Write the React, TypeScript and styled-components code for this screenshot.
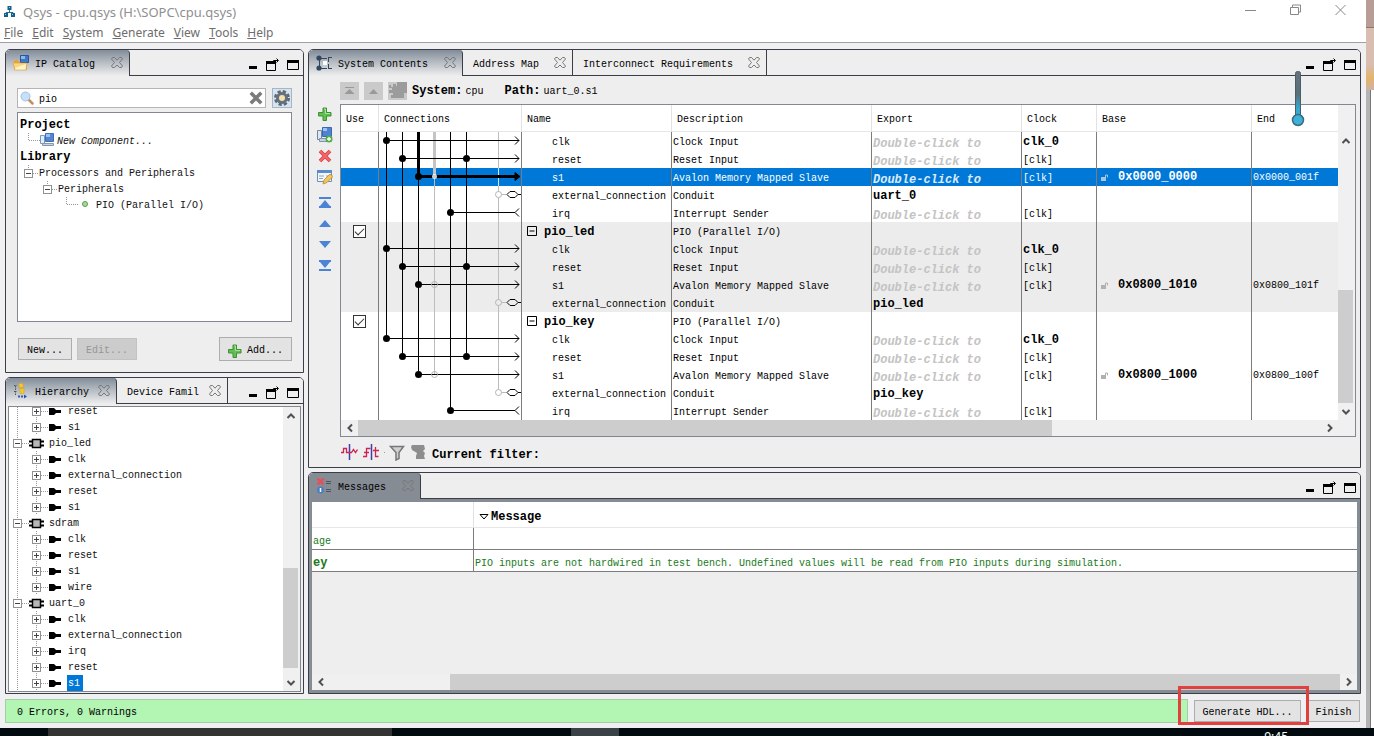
import React from 'react';
import styled, { createGlobalStyle, css } from 'styled-components';

const Global = createGlobalStyle`
  *, *::before, *::after { box-sizing: border-box; }
  body { margin: 0; background: #eeeeee; }
  button, input { font: inherit; color: inherit; }
  button { padding: 0; border: 0; background: none; white-space: nowrap; }
`;

const MONO = '"Liberation Mono", "Noto Sans CJK SC", monospace';
const UI = '"Noto Sans", "Open Sans", sans-serif';
const LINE = '#3b3e46';
const GRID = '#7c7c7c';

const Desktop = styled.div`
  display: grid;
  grid-template-columns: minmax(0, 1fr) 8px;
  grid-template-rows: minmax(0, 1fr) 8px;
  height: 100vh;
  overflow: hidden;
  font: 10px/16px ${MONO};
  color: #000;
`;

const AppWindow = styled.main`
  display: flex;
  flex-direction: column;
  background: #f0eff1;
  min-width: 0;
`;

const TitleBar = styled.header`
  display: flex;
  align-items: center;
  gap: 8px;
  height: 23px;
  padding: 0 20px 0 4px;
  background: #fff;
  color: #8f8f8f;
  font: 13px/20px ${UI};
`;

const WindowControls = styled.div`
  display: flex;
  align-items: center;
  gap: 34px;
  margin-left: auto;
  padding-bottom: 3px;
  button { display: flex; height: 20px; }
`;

const MenuBar = styled.nav`
  display: flex;
  gap: 9px;
  height: 20px;
  padding: 0 4px;
  background: #fff;
  border-bottom: 1px solid #a0a0a0;
  color: #6d6d6d;
  font: 12px/18px ${UI};
`;

const MenuItem = styled.button`
  &::first-letter { text-decoration: underline; }
`;

const Workspace = styled.div`
  flex: 1;
  min-height: 0;
  display: grid;
  grid-template-columns: 299px minmax(0, 1fr);
  gap: 4px;
  padding: 6px 5px 5px;
`;

const Column = styled.div`
  display: flex;
  flex-direction: column;
  gap: 4px;
  min-width: 0;
  min-height: 0;
`;

const PanelBox = styled.section<{ $basis?: number }>`
  display: flex;
  flex-direction: column;
  min-height: 0;
  ${p => (p.$basis ? css`flex: none; height: ${p.$basis}px;` : css`flex: 1;`)}
  border: 1px solid ${LINE};
  border-radius: 5px 5px 0 0;
  background: #eeeeee;
  overflow: hidden;
`;

const TabStrip = styled.div`
  display: flex;
  flex: none;
  height: 26px;
  border-bottom: 1px solid ${LINE};
  background: #eeeeee;
`;

const Tab = styled.div<{ $w: number; $active?: boolean; $focused?: boolean }>`
  display: flex;
  align-items: center;
  width: ${p => p.$w}px;
  height: ${p => (p.$active ? 26 : 25)}px;
  padding: 0 6px 0 ${p => (p.$active ? 7 : 10)}px;
  border-right: 1px solid ${LINE};
  background: ${p =>
    p.$focused ? '#868c94' : p.$active ? 'linear-gradient(#818c99, #b4bac1 45%, #eeeeee)' : '#eeeeee'};
  border-radius: ${p => (p.$active ? '4px 4px 0 0' : '0')};
`;

const TabTitle = styled.button`
  display: flex;
  align-items: center;
  gap: 6px;
  flex: 1;
  min-width: 0;
  overflow: hidden;
  line-height: 20px;
  span { padding-top: 4px; }
`;

const TabClose = styled.button`
  display: flex;
`;

const PanelControls = styled.div`
  display: flex;
  align-items: center;
  gap: 8px;
  margin-left: auto;
  padding: 4px 4px 0 0;
  button { display: flex; }
`;

const CatalogBody = styled.div`
  flex: 1;
  display: flex;
  flex-direction: column;
  min-height: 0;
  padding: 12px 11px 11px;
`;

const SearchRow = styled.div`
  display: flex;
  gap: 6px;
  height: 20px;
`;

const SearchField = styled.label`
  display: flex;
  align-items: center;
  flex: 1;
  gap: 5px;
  padding: 0 2px;
  background: #fff;
  border: 1px solid #b5b5b5;
  button { display: flex; }
`;

const SearchInput = styled.input`
  flex: 1;
  min-width: 0;
  border: 0;
  outline: 0;
  padding: 3px 0 0;
  background: transparent;
`;

const GearButton = styled.button`
  display: flex;
  align-items: center;
  justify-content: center;
  width: 20px;
  background: #d5e4f2;
  border: 1px solid #a9b6c2;
`;

const CatalogTree = styled.div`
  flex: 1;
  margin-top: 4px;
  padding: 4px 2px;
  background: #fff;
  border: 1px solid #828790;
  overflow: hidden;
`;

const CatalogRow = styled.div<{ $bold?: boolean; $italic?: boolean }>`
  display: flex;
  height: 16px;
  white-space: nowrap;
  font-size: ${p => (p.$bold ? 12 : 10)}px;
  font-weight: ${p => (p.$bold ? 700 : 400)};
  font-style: ${p => (p.$italic ? 'italic' : 'normal')};
  svg { flex: none; }
`;

const CatalogActions = styled.div`
  display: flex;
  align-items: center;
  gap: 5px;
  padding: 15px 0 0 1px;
`;

const PushButton = styled.button<{ $w?: number; $right?: boolean; $h?: number }>`
  display: flex;
  align-items: center;
  justify-content: center;
  gap: 5px;
  width: ${p => p.$w}px;
  height: ${p => p.$h ?? 22}px;
  padding-top: 3px;
  background: #e3e3e3;
  border: 1px solid #adadad;
  margin-left: ${p => (p.$right ? 'auto' : '0')};
  &:disabled { background: #cccccc; border-color: #c2c2c2; color: #969696; }
`;

const HierarchyBody = styled.div`
  flex: 1;
  display: flex;
  min-height: 0;
  margin: 2px 2px 1px;
  background: #fff;
  border: 1px solid #828790;
`;

const HierarchyTree = styled.div`
  flex: 1;
  display: flex;
  flex-direction: column;
  justify-content: flex-end;
  overflow: hidden;
`;

const HierarchyRow = styled.div<{ $root?: boolean }>`
  display: flex;
  flex: none;
  height: 16px;
  white-space: nowrap;
  gap: ${p => (p.$root ? 3 : 4)}px;
`;

const NodeName = styled.span<{ $selected?: boolean }>`
  padding: 1px 3px 0 1px;
  background: ${p => (p.$selected ? '#0078d7' : 'transparent')};
  color: ${p => (p.$selected ? '#fff' : '#111')};
`;

const VScroll = styled.div`
  flex: none;
  display: flex;
  flex-direction: column;
  width: 17px;
  padding-right: 2px;
  background: #f0f0f0;
  button { display: flex; justify-content: center; align-items: center; height: 17px; }
`;

const HScroll = styled.div<{ $corner?: boolean }>`
  flex: none;
  display: flex;
  height: 16px;
  padding-right: ${p => (p.$corner ? 17 : 0)}px;
  background: #f0f0f0;
  button { display: flex; justify-content: center; align-items: center; width: 17px; }
`;

const HeaderCorner = styled.div`
  flex: none;
  height: 27px;
`;

const Space = styled.div<{ $grow: number }>`
  flex: ${p => p.$grow} 1 0;
`;

const Thumb = styled.div<{ $grow: number }>`
  flex: ${p => p.$grow} 1 0;
  background: #cdcdcd;
`;

const SystemBody = styled.div`
  flex: 1;
  display: grid;
  grid-template-columns: 31px minmax(0, 1fr);
  grid-template-rows: 28px minmax(0, 1fr) 30px;
  min-height: 0;
  padding-right: 4px;
`;

const PathBar = styled.div`
  grid-column: 2;
  display: flex;
  align-items: center;
  gap: 5px;
  padding-top: 1px;
`;

const PathText = styled.div`
  display: flex;
  align-items: baseline;
  gap: 3px;
  padding-top: 2px;
`;

const NavButton = styled.button`
  display: flex;
  align-items: center;
  justify-content: center;
  width: 19px;
  height: 18px;
  background: #cacaca;
`;

const Strong = styled.b<{ $gap?: boolean }>`
  font-size: 12px;
  margin-left: ${p => (p.$gap ? 18 : 0)}px;
`;

const SideTools = styled.div`
  display: flex;
  flex-direction: column;
  gap: 9px;
  padding-top: 2px;
`;

const ToolGroup = styled.div`
  display: flex;
  flex-direction: column;
  align-items: center;
  gap: 5px;
  button { display: flex; align-items: center; height: 16px; }
`;

const TableFrame = styled.div`
  display: flex;
  flex-direction: column;
  border: 1px solid #828790;
  background: #fff;
  min-width: 0;
  min-height: 0;
`;

const TableArea = styled.div`
  flex: 1;
  display: flex;
  min-height: 0;
`;

const TableClip = styled.div`
  flex: 1;
  overflow: hidden;
  min-width: 0;
`;

const Grid = styled.table`
  width: 100%;
  table-layout: fixed;
  border-collapse: separate;
  border-spacing: 0;
`;

const HeadCell = styled.th`
  height: 27px;
  padding: 4px 0 0 5px;
  border-left: 1px solid #e2e2e2;
  border-bottom: 1px solid #e6e6e6;
  font-weight: 400;
  text-align: left;
  &:first-child { border-left: 0; }
`;

const Row = styled.tr<{ $tone: Tone }>`
  background: ${p => (p.$tone === 'selected' ? '#0078d7' : p.$tone === 'gray' ? '#ececec' : '#fff')};
  color: ${p => (p.$tone === 'selected' ? '#fff' : '#000')};
`;

const Cell = styled.td<{ $bold?: boolean; $indent?: boolean }>`
  height: 18px;
  padding: 3px 0 0 1px;
  border-left: 1px solid ${GRID};
  line-height: 15px;
  white-space: nowrap;
  overflow: hidden;
  ${p => p.$bold && css`font-size: 12px; font-weight: 700;`}
  ${p => p.$indent && css`padding-left: 30px;`}
`;

const AddressCell = styled(Cell)`
  padding-top: 1px;
  line-height: 17px;
`;

const UseCell = styled(Cell)`
  border-left: 0;
  padding: 0 0 0 12px;
`;

const WireCell = styled.td`
  padding: 0;
  border-left: 1px solid ${GRID};
  vertical-align: top;
  svg { display: block; }
`;

const Hint = styled.div<{ $selected?: boolean }>`
  padding-top: 3px;
  line-height: 12px;
  font-size: 12px;
  font-weight: 700;
  font-style: italic;
  color: ${p => (p.$selected ? '#dcebfa' : '#c3c3c3')};
`;

const Group = styled.span`
  display: flex;
  align-items: center;
  gap: 6px;
  padding-left: 4px;
  font-size: 12px;
  font-weight: 700;
`;

const Address = styled.span`
  display: flex;
  align-items: center;
  gap: 8px;
  padding-left: 2px;
  font-size: 12px;
  font-weight: 700;
`;

const Check = styled.input`
  appearance: none;
  display: block;
  width: 13px;
  height: 13px;
  margin: 0;
  border: 1px solid #333;
  background: #fff;
  &:checked::after {
    content: '';
    display: block;
    width: 9px;
    height: 5px;
    margin: 2px 0 0 1px;
    border: solid #333;
    border-width: 0 0 1px 1px;
    transform: rotate(-45deg);
  }
`;

const FilterBar = styled.div`
  grid-column: 2;
  display: flex;
  align-items: center;
  gap: 5px;
  padding-left: 1px;
  button { display: flex; }
  ${Strong} { padding: 6px 0 0 1px; }
`;

const FilterDivider = styled.i`
  width: 1px;
  height: 1px;
  margin: 0 -1px;
  background: #999;
`;

const MessageBody = styled.div`
  flex: 1;
  display: flex;
  flex-direction: column;
  min-height: 0;
  border: 3px solid #868c94;
  background: #eeeeee;
`;

const MessageTable = styled.table`
  width: 100%;
  table-layout: fixed;
  border-collapse: separate;
  border-spacing: 0;
  background: #fff;
  color: #187a18;
  th {
    height: 26px;
    padding: 5px 0 0 5px;
    border-left: 1px solid #e2e2e2;
    border-bottom: 1px solid #e6e6e6;
    font-size: 12px;
    text-align: left;
    color: #000;
  }
  td {
    height: 22px;
    padding: 5px 0 0 1px;
    line-height: 15px;
    border-left: 1px solid ${GRID};
    border-bottom: 1px solid ${GRID};
    white-space: nowrap;
    overflow: hidden;
  }
  th:first-child, td:first-child { border-left: 0; }
  b { display: block; font-size: 12px; }
`;

const MessageHead = styled.span`
  display: flex;
  align-items: center;
  gap: 2px;
`;

const StatusBar = styled.footer`
  display: flex;
  align-items: center;
  gap: 6px;
  padding: 0 6px 5px 5px;
`;

const StatusText = styled.div`
  flex: 1;
  height: 24px;
  padding: 3px 0 0 11px;
  line-height: 20px;
  background: #b3f5b3;
  border: 1px solid #a4cfa4;
`;

const Highlighted = styled.div`
  position: relative;
  &::after {
    content: '';
    position: absolute;
    inset: -14px -8px -3px -16px;
    border: 3px solid #e0413f;
    pointer-events: none;
  }
`;

const Thermometer = styled.svg`
  position: absolute;
  top: 70px;
  right: 68px;
`;

const Backdrop = styled.aside`
  display: flex;
  flex-direction: column;
  background: #fff;
`;

const BackdropArt = styled.div`
  height: 90px;
  background: linear-gradient(#b79d96 0 27px, #8d746e 27px 28px, #d8bdb0 28px 65px, #e3b468 78px, #cfb2a5 90px);
`;

const BackdropEdge = styled.div`
  flex: 1;
  width: 5px;
  background: #b4b4b4;
  border-right: 1px solid #777;
`;

const TaskBar = styled.div`
  grid-column: 1 / -1;
  display: flex;
  height: 8px;
  overflow: hidden;
  background: #010b0f;
  color: #fff;
  font: 12px/16px ${UI};
`;

const Task = styled.div<{ $at: number; $w: number; $tone: string }>`
  flex: none;
  width: ${p => p.$w}px;
  margin-left: ${p => p.$at}px;
  background: ${p => p.$tone};
`;

const Clock = styled.time`
  margin-left: auto;
  margin-right: 86px;
  padding-top: 1px;
`;

/* ---------- icons ---------- */

const CloseGlyph = () => (
  <svg width="12" height="12" viewBox="0 0 12 12" fill="none" stroke="#777" strokeWidth="1">
    <path d="M1.500 .5h2L6 3.200 8.500 .5h2l1 1.500L8.500 5.500l3 3.500-1 1.500h-2L6 8l-2.500 2.500h-2l-1-1.500 3-3.500-3-3.500z" />
  </svg>
);

const MinIcon = () => (
  <svg width="9" height="12" viewBox="0 0 9 12"><path d="M0 7h8v3H0z" fill="#000" /></svg>
);

const FloatIcon = () => (
  <svg width="13" height="13" viewBox="0 0 13 13" fill="none" stroke="#000">
    <path d="M.5 3.500v9h9v-9" /><path d="M0 4.500h10" strokeWidth="3" />
    <path d="M7.500 4.500V2.500H12M10.500 .5l2 2-2 2" />
  </svg>
);

const MaxIcon = () => (
  <svg width="12" height="10" viewBox="0 0 12 10" fill="none" stroke="#000">
    <path d="M.5 .5h11v9H.5z" /><path d="M0 1.500h12" strokeWidth="3" />
  </svg>
);

const QsysIcon = () => (
  <svg width="11" height="12" viewBox="0 0 11 12">
    <path d="M5.500 4v3M2 8V6.500h7V8" stroke="#1f6f96" fill="none" />
    <path d="M3.500 0h4v4h-4zM0 7h4v4H0zM7 7h4v4H7z" fill="#12628c" />
    <path d="M5 1h1v1H5zM1 8h1v1H1zM8 8h1v1H8z" fill="#7fd0e8" />
  </svg>
);

const CatalogIcon = () => (
  <svg width="16" height="16" viewBox="0 0 16 16">
    <path d="M1 5h4l1 2h8v8H1z" fill="#e8a33a" />
    <path d="M7.500 .5h8v7h-8z" fill="#3f78c8" stroke="#2a559b" />
    <path d="M8 1h4v3H8z" fill="#8fb8ea" />
    <path d="M0 8h14l-1 7H2z" fill="#fbd680" stroke="#d79a3a" strokeWidth=".6" />
    <path d="M2 13l11-4-.5 5.500H2z" fill="#fff1c8" />
  </svg>
);

const HierarchyIcon = () => (
  <svg width="16" height="16" viewBox="0 0 16 16" fill="none">
    <path d="M2.500 3v9M1 2.500h3M1 8.500h3" stroke="#555" strokeDasharray="1.500 1" />
    <path d="M6 .5h4v4H6zM7 5.500h4v5H7z" fill="#f2c830" stroke="#d8a520" strokeWidth=".6" />
    <path d="M5 13.500h2M8 13.500h2" stroke="#345db0" strokeWidth="2" /><path d="M11 11.500l3 2-3 2z" fill="#2b50b0" />
  </svg>
);

const SystemIcon = () => (
  <svg width="16" height="16" viewBox="0 0 16 16" fill="none">
    <path d="M3.500 2.500v11M3 3.500h8M3 13.500h8" stroke="#33475c" />
    <path d="M7 6h4v4H7z" fill="#fff" />
    <path d="M12 2h4v1h-3v4h-1zM12 9h1v4h3v1h-4z" fill="#33475c" />
    <circle cx="3" cy="3" r="2.600" fill="#2f4964" /><circle cx="3" cy="13" r="2.600" fill="#2f4964" />
  </svg>
);

const MessagesIcon = () => (
  <svg width="16" height="16" viewBox="0 0 16 16" fill="none">
    <path d="M1.500 .5l6 6M7.500 .5l-6 6" stroke="#e2525b" strokeWidth="2.500" />
    <circle cx="4.500" cy="12" r="3.500" fill="#4b7fc4" /><path d="M4.500 10v4" stroke="#fff" strokeWidth="1.500" />
    <path d="M10 3.500h5M10 5.500h5M10 11.500h5M10 13.500h5" stroke="#4a5563" />
  </svg>
);

const MagnifierIcon = () => (
  <svg width="14" height="14" viewBox="0 0 14 14" fill="none">
    <path d="M8.500 8.500l4 4" stroke="#c78f5c" strokeWidth="2.500" strokeLinecap="round" />
    <circle cx="5.500" cy="5.500" r="4.500" fill="#c6e0f8" stroke="#9fc1e4" />
  </svg>
);

const ClearIcon = () => (
  <svg width="14" height="14" viewBox="0 0 14 14"><path d="M3 3l8 8M11 3L3 11" stroke="#7b7b7b" strokeWidth="3.500" strokeLinecap="square" /></svg>
);

const GearIcon = () => (
  <svg width="18" height="18" viewBox="0 0 18 18">
    <circle cx="9" cy="9" r="6.500" fill="none" stroke="#5e6873" strokeWidth="3" strokeDasharray="3.100 2" />
    <circle cx="9" cy="9" r="6" fill="#66717d" /><circle cx="9" cy="9" r="3" fill="#f5e3ad" />
  </svg>
);

const PlusIcon = () => (
  <svg width="14" height="14" viewBox="0 0 14 14">
    <path d="M5 1h3.500v4.500H13V9H8.500v4.500H5V9H.5V5.500H5z" fill="#62bf52" stroke="#3c8f35" />
    <path d="M6 2h1.500v4.500H12" fill="none" stroke="#a9e39b" />
  </svg>
);

const NewComponentIcon = () => (
  <svg width="16" height="14" viewBox="0 0 16 14">
    <path d="M.5 2.500h4v8h-4z" fill="#e4eef8" stroke="#7799bb" />
    <path d="M5.500 .5h8v8h-8z" fill="#5585cf" stroke="#3f6fb8" /><path d="M6 1h4v3H6z" fill="#9cc0ee" />
    <path d="M2.500 10.500h11v2h-11z" fill="#c5d3e2" stroke="#8398ad" />
  </svg>
);

const AddComponentIcon = () => (
  <svg width="17" height="16" viewBox="0 0 17 16">
    <path d="M1.500 3.500h4v9h-4z" fill="#dfe8f2" stroke="#6d87a5" />
    <path d="M6.500 .5h9v9h-9z" fill="#4f82cf" stroke="#386ab3" /><path d="M7 1h4v3H7z" fill="#9dc2f0" />
    <path d="M3.500 11.500h9v3h-9z" fill="#c4d2e1" stroke="#7f94a9" />
    <circle cx="13" cy="12" r="3.500" fill="#4fae45" /><path d="M13 10v4M11 12h4" stroke="#fff" strokeWidth="1.300" />
  </svg>
);

const RemoveIcon = () => (
  <svg width="14" height="14" viewBox="0 0 14 14">
    <path d="M2 2l10 10M12 2L2 12" stroke="#d93a3e" strokeWidth="3.600" />
    <path d="M2 2l10 10M12 2L2 12" stroke="#f4676a" strokeWidth="2" />
  </svg>
);

const EditIcon = () => (
  <svg width="17" height="16" viewBox="0 0 17 16">
    <path d="M1.500 1.500h14v11h-14z" fill="#f3f7fb" stroke="#6d8fb8" /><path d="M1 1h15v3H1z" fill="#5b8ccc" />
    <path d="M3 7h5M3 9.500h4M10 7h4" stroke="#8aa6c6" />
    <path d="M7 15l1-4 6-6 3 2.500-6 6z" fill="#f3c55a" stroke="#b98a34" strokeWidth=".8" />
  </svg>
);

const BLUE = '#4b83d6';
const ToTop = () => (
  <svg width="12" height="11" viewBox="0 0 12 11"><path d="M0 0h12v2H0zM0 9h12v2H0zM6 3l5 6H1z" fill={BLUE} /></svg>
);
const Up = () => (
  <svg width="12" height="16" viewBox="0 0 12 16"><path d="M6 5l6 7H0z" fill={BLUE} /></svg>
);
const Down = () => (
  <svg width="12" height="16" viewBox="0 0 12 16"><path d="M6 12l6-7H0z" fill={BLUE} /></svg>
);
const ToBottom = () => (
  <svg width="12" height="11" viewBox="0 0 12 11"><path d="M0 0h12v2H0zM0 9h12v2H0zM6 8l5-6H1z" fill={BLUE} /></svg>
);
const TopGray = () => (
  <svg width="9" height="8" viewBox="0 0 9 8"><path d="M0 0h9v1H0zM0 6h9v1H0zM4.500 2l4 4h-8z" fill="#999" /></svg>
);
const UpGray = () => (
  <svg width="9" height="8" viewBox="0 0 9 8"><path d="M4.500 2L9 7H0z" fill="#999" /></svg>
);

const ChipGray = () => (
  <svg width="18" height="17" viewBox="0 0 18 17">
    <path d="M0 3h2v2h2V2h3v2h1V0h10v11h-3v5H2v-3h2v-2H0V8h3V6H0z" fill="#9c9c9c" />
  </svg>
);

const Chevron = ({ d }: { d: 'up' | 'down' | 'left' | 'right' }) => {
  const path = { up: 'M1.500 7L5 3.500 8.500 7', down: 'M1.500 3L5 6.500 8.500 3', left: 'M7 1.500L3.500 5 7 8.500', right: 'M3 1.500L6.500 5 3 8.500' }[d];
  return <svg width="10" height="10" viewBox="0 0 10 10" fill="none" stroke="#505050" strokeWidth="2"><path d={path} /></svg>;
};

const Expander = ({ x, plus }: { x: number; plus?: boolean }) => (
  <g>
    <rect x={x + 0.5} y="4.500" width="8" height="8" fill="#fff" stroke="#919191" />
    <path d={`M${x + 2} 8.500h5` + (plus ? `M${x + 4.5} 6v5` : '')} stroke="#444" />
  </g>
);

const LockIcon = ({ c }: { c: string }) => (
  <svg width="10" height="10" viewBox="0 0 10 10" fill="none"><path d="M1 4h5v4H1z" fill={c} /><path d="M5.500 4V2h2v2.500" stroke={c} /></svg>
);

const WaveIcon = ({ variant }: { variant: 1 | 2 }) => (
  <svg width="17" height="16" viewBox="0 0 17 16" fill="none">
    <path d="M8.500 0v16" stroke="#3c3fae" strokeWidth="1.500" />
    <path
      d={variant === 1 ? 'M0 8.500h2.500v-4h3v4h5l2-3 2 3 2-3' : 'M0 12.500h3.500V4.500h4M1 8.500h5M12.500 3v9.500h3M10 6.500h6'}
      stroke="#d0234f"
      strokeWidth="1.300"
    />
  </svg>
);

const FunnelIcon = () => (
  <svg width="16" height="17" viewBox="0 0 16 17">
    <path d="M1.500 2.500h13L10 8.500v6l-3 1.500V8.500z" fill="#d0d0d0" stroke="#777" strokeWidth="1.500" />
  </svg>
);

const FunnelGray = () => (
  <svg width="16" height="16" viewBox="0 0 16 16"><path d="M2 1h12l1 4-2 2 2 2-1 3 1 3H6v-3l1-3-5-3-1-3z" fill="#8d8d8d" /></svg>
);

/* ---------- shared pieces ---------- */

type TabSpec = { title: string; w: number; icon?: React.ReactNode };

function Panel({ tabs, height, focused, children }: { tabs: TabSpec[]; height?: number; focused?: boolean; children: React.ReactNode }) {
  return (
    <PanelBox $basis={height} aria-label={tabs[0].title}>
      <TabStrip>
        {tabs.map((t, i) => (
          <Tab key={t.title} $w={t.w} $active={i === 0} $focused={focused}>
            <TabTitle>{t.icon}<span>{t.title}</span></TabTitle>
            <TabClose aria-label={`Close ${t.title}`}><CloseGlyph /></TabClose>
          </Tab>
        ))}
        <PanelControls>
          <button aria-label="Minimize panel"><MinIcon /></button>
          <button aria-label="Detach panel"><FloatIcon /></button>
          <button aria-label="Maximize panel"><MaxIcon /></button>
        </PanelControls>
      </TabStrip>
      {children}
    </PanelBox>
  );
}

type ScrollProps = { before: number; size: number; after: number; corner?: boolean };

function VerticalScroll({ before, size, after, corner }: ScrollProps) {
  return (
    <VScroll>
      {corner && <HeaderCorner />}
      <button aria-label="Scroll up"><Chevron d="up" /></button>
      <Space $grow={before} /><Thumb $grow={size} /><Space $grow={after} />
      <button aria-label="Scroll down"><Chevron d="down" /></button>
    </VScroll>
  );
}

function HorizontalScroll({ before, size, after, corner }: ScrollProps) {
  return (
    <HScroll $corner={corner}>
      <button aria-label="Scroll left"><Chevron d="left" /></button>
      <Space $grow={before} /><Thumb $grow={size} /><Space $grow={after} />
      <button aria-label="Scroll right"><Chevron d="right" /></button>
    </HScroll>
  );
}

/* ---------- hierarchy ---------- */

const nodes: { name: string; root?: boolean; selected?: boolean }[] = [
  { name: 'reset' }, { name: 's1' },
  { name: 'pio_led', root: true }, { name: 'clk' }, { name: 'external_connection' }, { name: 'reset' }, { name: 's1' },
  { name: 'sdram', root: true }, { name: 'clk' }, { name: 'reset' }, { name: 's1' }, { name: 'wire' },
  { name: 'uart_0', root: true }, { name: 'clk' }, { name: 'external_connection' }, { name: 'irq' }, { name: 'reset' },
  { name: 's1', selected: true },
];

function NodeGuide({ root }: { root?: boolean }) {
  return root ? (
    <svg width="36" height="16" viewBox="0 0 36 16">
      <path d="M8.500 0v16M13 8.500h8" stroke="#999" strokeDasharray="1 1" />
      <Expander x={4} />
      <path d="M20 6.500h15M20 10.500h15" stroke="#000" strokeWidth="2" />
      <rect x="23.500" y="4.500" width="8" height="8" fill="#b8b8b8" stroke="#000" strokeWidth="1.500" />
    </svg>
  ) : (
    <svg width="54" height="16" viewBox="0 0 54 16">
      <path d="M8.500 0v16M27.500 0v16M32 8.500h7" stroke="#999" strokeDasharray="1 1" />
      <Expander x={23} plus />
      <path d="M40 5h5l2 2h5v3h-5l-2 2h-5z" fill="#000" />
    </svg>
  );
}

/* ---------- connection table ---------- */

type Tone = 'white' | 'gray' | 'selected';
type Entry = {
  name: string; desc: string; group?: boolean; exported?: string; hint?: boolean;
  clock?: string; base?: string; end?: string; tone: Tone;
};

const iface = (tone: Tone, name: string, desc: string, rest: Partial<Entry> = {}): Entry => ({ tone, name, desc, ...rest });
const linked = { hint: true, clock: '[clk]' };

const entries: Entry[] = [
  iface('white', 'clk', 'Clock Input', { hint: true, clock: 'clk_0' }),
  iface('white', 'reset', 'Reset Input', linked),
  iface('selected', 's1', 'Avalon Memory Mapped Slave', { ...linked, base: '0x0000_0000', end: '0x0000_001f' }),
  iface('white', 'external_connection', 'Conduit', { exported: 'uart_0' }),
  iface('white', 'irq', 'Interrupt Sender', linked),
  iface('gray', 'pio_led', 'PIO (Parallel I/O)', { group: true }),
  iface('gray', 'clk', 'Clock Input', { hint: true, clock: 'clk_0' }),
  iface('gray', 'reset', 'Reset Input', linked),
  iface('gray', 's1', 'Avalon Memory Mapped Slave', { ...linked, base: '0x0800_1010', end: '0x0800_101f' }),
  iface('gray', 'external_connection', 'Conduit', { exported: 'pio_led' }),
  iface('white', 'pio_key', 'PIO (Parallel I/O)', { group: true }),
  iface('white', 'clk', 'Clock Input', { hint: true, clock: 'clk_0' }),
  iface('white', 'reset', 'Reset Input', linked),
  iface('white', 's1', 'Avalon Memory Mapped Slave', { ...linked, base: '0x0800_1000', end: '0x0800_100f' }),
  iface('white', 'external_connection', 'Conduit', { exported: 'pio_key' }),
  iface('white', 'irq', 'Interrupt Sender', linked),
];

const rowY = (i: number) => i * 18 + 8.5;

function Wires() {
  const dot = (x: number, i: number) => <circle key={`${x}-${i}`} cx={x} cy={rowY(i)} r="3.500" fill="#000" />;
  const ring = (x: number, i: number, bg = '#fff') => (
    <circle key={`r${x}-${i}`} cx={x} cy={rowY(i)} r="3" fill={bg} stroke="#b4b4b4" />
  );
  const arrow = (x: number, i: number) => (
    <path key={`a${i}`} d={`M${x} ${rowY(i)}H140M136 ${rowY(i) - 4}l4 4-4 4`} stroke="#000" fill="none" />
  );
  return (
    <svg width="142" height="288" viewBox="0 0 142 288" role="img" aria-label="Connections">
      <rect y="36" width="142" height="18" fill="#0078d7" />
      <rect y="90" width="142" height="90" fill="#ececec" />
      <path d={`M55.500 0V${rowY(13)}M119.500 0V${rowY(14)}`} stroke="#bdbdbd" />
      <path d={`M55.500 0V${rowY(2)}`} stroke="#c4c4c4" strokeWidth="3" />
      <path d="M119.500 36V54" stroke="#d5e6f6" />
      <path
        d={`M7.500 0V${rowY(11)}M23.500 0V${rowY(12)}M39.500 0V${rowY(13)}M71.500 0V${rowY(15)}M87.500 0V${rowY(12)}`}
        stroke="#000"
      />
      <path d={`M39.500 0V${rowY(2)}`} stroke="#000" strokeWidth="3" />
      {[0, 6, 11].map(i => [arrow(7.5, i), dot(7.5, i)])}
      {[1, 7, 12].map(i => [arrow(23.5, i), dot(23.5, i), dot(87.5, i)])}
      {[8, 13].map(i => [arrow(39.5, i), ring(55.5, i, 'none'), dot(39.5, i)])}
      <path d={`M39.500 ${rowY(2)}H139`} stroke="#000" strokeWidth="3" />
      <path d={`M136 ${rowY(2) - 4}l5 4-5 4z`} fill="#000" stroke="#000" />
      {dot(39.5, 2)}
      <circle cx="55.500" cy={rowY(2)} r="2.500" fill="#fff" opacity=".8" />
      {[3, 9, 14].map(i => (
        <g key={i} fill="none">
          <path d={`M122 ${rowY(i)}h5`} stroke="#bbb" />
          {ring(119.5, i, i === 9 ? '#ececec' : '#fff')}
          <path d={`M128 ${rowY(i)}l3-3h5l3 3-3 3h-5zM139 ${rowY(i)}h3`} stroke="#000" />
        </g>
      ))}
      {[4, 15].map(i => (
        <g key={i}>
          <path d={`M71.500 ${rowY(i)}H136M140 ${rowY(i) - 4}l-4 4 4 4`} stroke="#000" fill="none" />
          {dot(71.5, i)}
        </g>
      ))}
    </svg>
  );
}

function ConnectionTable() {
  const heads = ['Use', 'Connections', 'Name', 'Description', 'Export', 'Clock', 'Base', 'End'];
  const widths = [37, 143, 150, 200, 150, 75, 155];
  return (
    <Grid>
      <colgroup>
        {widths.map((w, i) => <col key={i} width={w} />)}
        <col />
      </colgroup>
      <thead>
        <tr>{heads.map(h => <HeadCell key={h} scope="col">{h}</HeadCell>)}</tr>
      </thead>
      <tbody>
        {entries.map((e, i) => (
          <Row key={i} $tone={e.tone}>
            <UseCell>{e.group && <Check type="checkbox" defaultChecked aria-label={`Use ${e.name}`} />}</UseCell>
            {i === 0 && <WireCell rowSpan={entries.length}><Wires /></WireCell>}
            <Cell $indent={!e.group}>
              {e.group ? (
                <Group>
                  <svg width="11" height="14" viewBox="0 0 11 14" fill="none" stroke="#000">
                    <path d="M.5 .5h9v9h-9zM2.500 5h5" />
                  </svg>
                  {e.name}
                </Group>
              ) : e.name}
            </Cell>
            <Cell>{e.desc}</Cell>
            <Cell $bold={!!e.exported}>{e.hint ? <Hint $selected={e.tone === 'selected'}>Double-click to</Hint> : e.exported}</Cell>
            <Cell $bold={e.clock === 'clk_0'}>{e.clock}</Cell>
            <AddressCell>
              {e.base && <Address><LockIcon c={e.tone === 'selected' ? '#a9c4dd' : '#b0b0b0'} />{e.base}</Address>}
            </AddressCell>
            <AddressCell>{e.end}</AddressCell>
          </Row>
        ))}
      </tbody>
    </Grid>
  );
}

/* ---------- page ---------- */

export default function App() {
  return (
    <Desktop>
      <Global />
      <AppWindow>
        <TitleBar>
          <QsysIcon />
          <span>Qsys - cpu.qsys (H:\SOPC\cpu.qsys)</span>
          <WindowControls>
            <button aria-label="Minimize"><svg width="11" height="20" viewBox="0 0 11 20"><path d="M0 10.500h11" stroke="#888" /></svg></button>
            <button aria-label="Restore">
              <svg width="11" height="20" viewBox="0 0 11 20" fill="none" stroke="#888"><path d="M.5 7.500h8v7h-8zM2.500 7v-2h8v7h-2" /></svg>
            </button>
            <button aria-label="Close window">
              <svg width="11" height="20" viewBox="0 0 11 20"><path d="M.5 5l10 10M10.500 5L.5 15" stroke="#888" /></svg>
            </button>
          </WindowControls>
        </TitleBar>
        <MenuBar aria-label="Main menu">
          {['File', 'Edit', 'System', 'Generate', 'View', 'Tools', 'Help'].map(m => <MenuItem key={m}>{m}</MenuItem>)}
        </MenuBar>

        <Workspace>
          <Column>
            <Panel height={324} tabs={[{ title: 'IP Catalog', w: 124, icon: <CatalogIcon /> }]}>
              <CatalogBody>
                <SearchRow>
                  <SearchField>
                    <MagnifierIcon />
                    <SearchInput defaultValue="pio" aria-label="Search catalog" />
                    <button aria-label="Clear search"><ClearIcon /></button>
                  </SearchField>
                  <GearButton aria-label="Catalog settings"><GearIcon /></GearButton>
                </SearchRow>
                <CatalogTree>
                  <CatalogRow $bold>Project</CatalogRow>
                  <CatalogRow $italic>
                    <svg width="20" height="16" viewBox="0 0 20 16"><path d="M8.500 0v7.500H20" fill="none" stroke="#999" strokeDasharray="1 1" /></svg>
                    <NewComponentIcon /><NodeName>New Component...</NodeName>
                  </CatalogRow>
                  <CatalogRow $bold>Library</CatalogRow>
                  <CatalogRow>
                    <svg width="18" height="16" viewBox="0 0 18 16">
                      <path d="M8.500 0v3M13 8.500h5" stroke="#999" strokeDasharray="1 1" /><Expander x={4} />
                    </svg>
                    <NodeName>Processors and Peripherals</NodeName>
                  </CatalogRow>
                  <CatalogRow>
                    <svg width="37" height="16" viewBox="0 0 37 16">
                      <path d="M27.500 0v3M32 8.500h5" stroke="#999" strokeDasharray="1 1" /><Expander x={23} />
                    </svg>
                    <NodeName>Peripherals</NodeName>
                  </CatalogRow>
                  <CatalogRow>
                    <svg width="75" height="16" viewBox="0 0 75 16">
                      <path d="M46.500 0v7.500H59" fill="none" stroke="#999" strokeDasharray="1 1" />
                      <circle cx="65" cy="7" r="2.500" fill="#a6dc92" stroke="#5a9a50" />
                    </svg>
                    <NodeName>PIO (Parallel I/O)</NodeName>
                  </CatalogRow>
                </CatalogTree>
                <CatalogActions>
                  <PushButton $w={54}>New...</PushButton>
                  <PushButton $w={60} disabled>Edit...</PushButton>
                  <PushButton $w={73} $h={24} $right><PlusIcon />Add...</PushButton>
                </CatalogActions>
              </CatalogBody>
            </Panel>
            <Panel tabs={[{ title: 'Hierarchy', w: 111, icon: <HierarchyIcon /> }, { title: 'Device Famil', w: 111 }]}>
              <HierarchyBody>
                <HierarchyTree>
                  {nodes.map((n, i) => (
                    <HierarchyRow key={i} $root={n.root}>
                      <NodeGuide root={n.root} />
                      <NodeName $selected={n.selected}>{n.name}</NodeName>
                    </HierarchyRow>
                  ))}
                </HierarchyTree>
                <VerticalScroll before={144} size={100} after={6} />
              </HierarchyBody>
            </Panel>
          </Column>

          <Column>
            <Panel
              height={419}
              tabs={[
                { title: 'System Contents', w: 154, icon: <SystemIcon /> },
                { title: 'Address Map', w: 110 },
                { title: 'Interconnect Requirements', w: 194 },
              ]}
            >
              <SystemBody>
                <PathBar>
                  <NavButton disabled aria-label="Go to top"><TopGray /></NavButton>
                  <NavButton disabled aria-label="Go up"><UpGray /></NavButton>
                  <NavButton disabled aria-label="Drill into component"><ChipGray /></NavButton>
                  <PathText>
                    <Strong>System:</Strong>cpu
                    <Strong $gap>Path:</Strong>uart_0.s1
                  </PathText>
                </PathBar>
                <SideTools>
                  <ToolGroup>
                    <button aria-label="Add"><PlusIcon /></button>
                    <button aria-label="Add component"><AddComponentIcon /></button>
                    <button aria-label="Remove"><RemoveIcon /></button>
                    <button aria-label="Edit"><EditIcon /></button>
                  </ToolGroup>
                  <ToolGroup>
                    <button aria-label="Move to top"><ToTop /></button>
                    <button aria-label="Move up"><Up /></button>
                    <button aria-label="Move down"><Down /></button>
                    <button aria-label="Move to bottom"><ToBottom /></button>
                  </ToolGroup>
                </SideTools>
                <TableFrame>
                  <TableArea>
                    <TableClip><ConnectionTable /></TableClip>
                    <VerticalScroll corner before={141} size={113} after={0} />
                  </TableArea>
                  <HorizontalScroll corner before={0} size={695} after={269} />
                </TableFrame>
                <FilterBar>
                  <button aria-label="Show signals"><WaveIcon variant={1} /></button>
                  <button aria-label="Show timing"><WaveIcon variant={2} /></button>
                  <FilterDivider />
                  <button aria-label="Filter"><FunnelIcon /></button>
                  <button aria-label="Clear filter"><FunnelGray /></button>
                  <Strong>Current filter:</Strong>
                </FilterBar>
              </SystemBody>
            </Panel>
            <Panel focused tabs={[{ title: 'Messages', w: 112, icon: <MessagesIcon /> }]}>
              <MessageBody>
                <MessageTable>
                  <colgroup><col width={161} /><col /></colgroup>
                  <thead>
                    <tr>
                      <th scope="col" aria-label="Path" />
                      <th scope="col">
                        <MessageHead>
                          <svg width="10" height="8" viewBox="0 0 10 8"><path d="M1 1.500h8L5 6z" fill="none" stroke="#000" /></svg>
                          Message
                        </MessageHead>
                      </th>
                    </tr>
                  </thead>
                  <tbody>
                    <tr><td>age</td><td /></tr>
                    <tr>
                      <td><b>ey</b></td>
                      <td>PIO inputs are not hardwired in test bench. Undefined values will be read from PIO inputs during simulation.</td>
                    </tr>
                  </tbody>
                </MessageTable>
                <Space $grow={1} />
                <HorizontalScroll before={121} size={890} after={0} />
              </MessageBody>
            </Panel>
          </Column>
        </Workspace>

        <StatusBar>
          <StatusText role="status">0 Errors, 0 Warnings</StatusText>
          <Highlighted><PushButton $w={107}>Generate HDL...</PushButton></Highlighted>
          <PushButton $w={53}>Finish</PushButton>
        </StatusBar>
      </AppWindow>

      <Backdrop><BackdropArt /><BackdropEdge /></Backdrop>

      <TaskBar>
        <Task $at={48} $w={344} $tone="#333333" />
        <Task $at={179} $w={48} $tone="#3a4248" />
        <Clock>9:45</Clock>
      </TaskBar>

      <Thermometer width="16" height="58" viewBox="0 0 16 58">
        <defs>
          <linearGradient id="mercury" x1="0" y1="0" x2="0" y2="1">
            <stop offset="0" stopColor="#66757d" /><stop offset=".5" stopColor="#57707c" /><stop offset=".8" stopColor="#35a9cf" />
          </linearGradient>
        </defs>
        <rect x="5.500" y="1.500" width="5" height="46" rx="2" fill="url(#mercury)" stroke="#4d5c66" />
        <circle cx="8" cy="50" r="5.500" fill="#3fb0d8" stroke="#3b6b7e" strokeWidth="1.500" />
      </Thermometer>
    </Desktop>
  );
}
